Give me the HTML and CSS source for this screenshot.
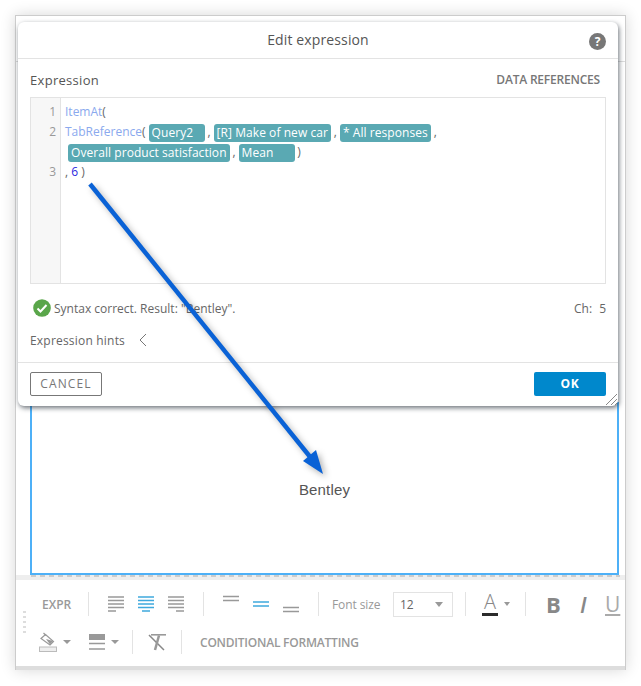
FILE: index.html
```html
<!DOCTYPE html>
<html lang="en">
<head>
<meta charset="utf-8">
<title>Edit expression</title>
<link rel="stylesheet" href="styles.css">
</head>
<body>
<div class="frame">
  <div class="app-head"></div>
  <div class="canvas">
    <div class="textbox"><span class="bentley">Bentley</span></div>
  </div>
  <div class="toolbar">
    <div class="grip"></div>
    <div class="tb-row tb-row-1">
      <span class="tb-label expr">EXPR</span>
      <span class="sep sep-a"></span>
      <svg class="ic ic-a" width="16" height="16" viewBox="0 0 16 16"><path d="M0 1h16M0 4.500h16M0 8h16M0 11.500h16M0 15h8" stroke="#999" stroke-width="1.500" fill="none"/></svg>
      <svg class="ic ic-a" width="16" height="16" viewBox="0 0 16 16"><path d="M0 1h16M0 4.500h16M0 8h16M0 11.500h16M4 15h8" stroke="#3fa9dd" stroke-width="1.500" fill="none"/></svg>
      <svg class="ic ic-a" width="16" height="16" viewBox="0 0 16 16"><path d="M0 1h16M0 4.500h16M0 8h16M0 11.500h16M8 15h8" stroke="#999" stroke-width="1.500" fill="none"/></svg>
      <span class="sep sep-b"></span>
      <svg class="ic ic-a" width="16" height="24" viewBox="0 0 16 24"><path d="M0 4.500h16M0 8.500h16" stroke="#999" stroke-width="1.500" fill="none"/></svg>
      <svg class="ic ic-a" width="16" height="24" viewBox="0 0 16 24"><path d="M0 10h16M0 14h16" stroke="#3fa9dd" stroke-width="1.500" fill="none"/></svg>
      <svg class="ic ic-a" width="16" height="24" viewBox="0 0 16 24"><path d="M0 15.500h16M0 19.500h16" stroke="#999" stroke-width="1.500" fill="none"/></svg>
      <span class="sep sep-b"></span>
      <span class="fs-label">Font size</span>
      <span class="select"><span>12</span><i class="caret caret-lt"></i></span>
      <span class="sep sep-c"></span>
      <span class="color-a">A</span>
      <i class="caret caret-small"></i>
      <span class="sep sep-d"></span>
      <span class="fmt-b">B</span>
      <span class="fmt-i">I</span>
      <span class="fmt-u">U</span>
    </div>
    <div class="tb-row tb-row-2">
      <svg class="ic" width="18" height="20" viewBox="0 0 18 20"><path d="M2 6.500L6.500 2.500 14.500 9.500 11 13Z" stroke="#999" stroke-width="1.200" fill="#fff"/><path d="M7 7L14 9 11 12.500Z" fill="#999"/><path d="M7 3.500L4.500 1" stroke="#999" stroke-width="1.200"/><rect x="0.500" y="15" width="17" height="4.500" fill="#eee" stroke="#bbb"/></svg>
      <i class="caret caret-small caret-paint"></i>
      <svg class="ic ic-borders" width="16" height="16" viewBox="0 0 16 16"><rect width="16" height="6" fill="#999"/><path d="M0 9.500h16M0 15h16" stroke="#999" stroke-width="1.500" fill="none"/></svg>
      <i class="caret caret-small caret-paint"></i>
      <span class="sep sep-e"></span>
      <svg class="ic" width="18" height="17" viewBox="0 0 18 17"><path d="M3 .800h15" stroke="#999" stroke-width="1.600"/><path d="M1 1l15 15" stroke="#888" stroke-width="1.500"/><path d="M11 1.500L7 16" stroke="#999" stroke-width="2.500"/></svg>
      <span class="sep sep-f"></span>
      <span class="tb-label cond">CONDITIONAL FORMATTING</span>
    </div>
  </div>
  <div class="frame-foot"></div>
</div>

<section class="dialog">
  <header class="dlg-head">
    <h1 class="dlg-title">Edit expression</h1>
    <span class="help">?</span>
  </header>
  <div class="dlg-body">
    <div class="expr-head">
      <span class="expr-label">Expression</span>
      <span class="data-refs">DATA REFERENCES</span>
    </div>
    <div class="editor">
      <div class="gutter">
        <div class="ln">1</div>
        <div class="ln">2</div>
        <div class="ln ln-wrap"></div>
        <div class="ln">3</div>
      </div>
      <div class="code">
        <div class="cl"><span class="fn">ItemAt</span>(</div>
        <div class="cl"><span class="fn">TabReference</span>(<span class="chip chip-q">Query2</span><span class="p">,</span><span class="chip">[R] Make of new car</span><span class="p">,</span><span class="chip">* All responses</span><span class="p">,</span></div>
        <div class="cl cl-wrap"><span class="chip">Overall product satisfaction</span><span class="p">,</span><span class="chip chip-m">Mean</span><span class="p">)</span></div>
        <div class="cl">, <span class="num">6</span> )</div>
      </div>
    </div>
    <div class="status">
      <svg class="check" width="18" height="18" viewBox="0 0 18 18"><circle cx="9" cy="9" r="8.800" fill="#5aa64a"/><path d="M4.500 9.500l3 3 6-6.500" stroke="#fff" stroke-width="2" fill="none"/></svg>
      <span class="status-text">Syntax correct. Result: "Bentley".</span>
      <span class="ch">Ch:<span class="ch-v">5</span></span>
    </div>
    <div class="hints">
      <span>Expression hints</span>
      <svg width="8" height="14" viewBox="0 0 8 14"><path d="M7 1L1 7l6 6" stroke="#777" fill="none"/></svg>
    </div>
  </div>
  <footer class="dlg-foot">
    <button class="btn btn-cancel">CANCEL</button>
    <button class="btn btn-ok">OK</button>
  </footer>
  <svg class="resize" width="11" height="11" viewBox="0 0 11 11"><path d="M0 11L11 0M5 11l6-6M9 11l2-2" stroke="#888" fill="none"/></svg>
</section>

<svg class="arrow" width="641" height="686" viewBox="0 0 641 686">
  <path d="M90 184L311 458" stroke="#0a62d6" stroke-width="4.500" fill="none"/>
  <path d="M323 474L303 461L316 450Z" fill="#0a62d6"/>
</svg>
</body>
</html>
```
FILE: styles.css
```css
* { box-sizing: border-box; }
html, body { margin: 0; height: 686px; overflow: hidden; background: #fff; }
body { font-family: "Open Sans", sans-serif; color: #555; }

.frame {
  width: 611px;
  height: 655px;
  margin: 15px 0 0 15px;
  border: 1px solid #ccc;
  border-bottom: 0;
  background: #fff;
  box-shadow: 0 0 14px rgba(0, 0, 0, .16);
  display: flex;
  flex-direction: column;
}
.app-head { height: 46px; border-bottom: 1px solid #ddd; flex: none; }
.canvas { flex: 1; padding: 340px 6px 0 14px; background: #fff; border-bottom: 5px solid #eee; }
.textbox {
  height: 173px;
  border: 2px solid #4db0f7;
  display: flex;
  align-items: center;
  justify-content: center;
  padding-top: 1px;
  background: #fff;
  position: relative;
}
.textbox::after {
  content: "";
  position: absolute; left: -1px; right: -3px; bottom: -4px; height: 2px;
  background: repeating-linear-gradient(90deg, #ccc 0 5px, transparent 5px 9px);
}
.bentley { font: 15px "Liberation Sans", sans-serif; color: #555; letter-spacing: .15px; }

.toolbar { height: 86px; flex: none; position: relative; padding: 12px 0 0 26px; background: #fff; }
.grip {
  position: absolute; left: 7px; top: 31px; width: 3px; height: 25px;
  background: repeating-linear-gradient(#ddd 0 2px, transparent 2px 5px);
}
.tb-row { display: flex; align-items: center; height: 24px; }
.tb-row-2 { margin: 14px 0 0 -3px; }
.frame-foot { height: 4px; background: #ddd; flex: none; }

.tb-label { font-size: 12px; font-weight: 600; color: #999; white-space: nowrap; }
.expr { width: 28px; }
.cond { letter-spacing: -.22px; }
.sep { width: 1px; height: 24px; background: #e3e3e3; flex: none; }
.sep-a { margin: 0 19px 0 18px; }
.sep-b { margin: 0 19px; }
.sep-c { margin: 0 16px 0 12px; }
.sep-d { margin: 0 20px 0 15px; }
.sep-e { margin: 0 15px 0 13px; }
.sep-f { margin: 0 18px 0 15px; }
.ic { flex: none; display: block; }
.ic-a { margin-right: 14px; }
.ic-a + .sep { margin-left: 5px; }
.ic-borders { margin-left: 18px; }
.fs-label { font-size: 12px; color: #999; width: 61px; margin-left: -6px; white-space: nowrap; letter-spacing: -.1px; }
.select {
  width: 60px; height: 25px; border: 1px solid #e3e3e3;
  display: flex; align-items: center; justify-content: space-between;
  padding: 0 9px 0 6px; font-size: 12px; color: #666;
}
.caret { display: block; width: 0; height: 0; border-style: solid; border-color: #999 transparent transparent; flex: none; }
.caret-lt { border-width: 5px 4.500px 0; }
.caret-small { border-width: 4px 3.500px 0; margin-left: 6px; }
.caret-paint { border-width: 4px 4px 0; }
.color-a {
  width: 16px; height: 24px; font-size: 20px; line-height: 20px; color: #888; text-align: center;
  border-bottom: 3px solid #2b2b2b; font-weight: 300;
}
.fmt-b { font-size: 22px; font-weight: 700; color: #888; width: 34px; line-height: 24px; }
.fmt-i { font-size: 22px; font-weight: 600; font-style: italic; color: #888; width: 25px; line-height: 24px; }
.fmt-u { font-size: 21px; color: #aaa; width: 16px; text-decoration: underline; line-height: 24px; flex: none; }

.dialog {
  position: absolute; left: 18px; top: 22px; width: 600px; height: 384px;
  background: #fff; border-radius: 6px;
  box-shadow: 1px 2px 5px rgba(30, 40, 50, .65);
  display: flex; flex-direction: column;
}
.dlg-head { height: 37px; border-bottom: 1px solid #e3e3e3; position: relative; display: flex; align-items: center; justify-content: center; flex: none; }
.dlg-title { margin: 0; font-size: 14px; font-weight: 500; color: #555; padding-bottom: 2px; letter-spacing: .13px; }
.help {
  position: absolute; right: 12px; top: 11px; width: 17px; height: 17px; border-radius: 50%;
  background: #777; color: #fff; font-size: 12px; font-weight: 700; line-height: 17px; text-align: center;
}
.dlg-body { flex: 1; padding: 0 12px; }
.expr-head { height: 38px; display: flex; align-items: center; justify-content: space-between; padding: 3px 6px 0 0; }
.expr-label { font-size: 13px; font-weight: 500; color: #555; letter-spacing: .3px; }
.data-refs { font-size: 12px; font-weight: 550; color: #777; letter-spacing: -.2px; }

.editor { height: 187px; border: 1px solid #e3e3e3; display: flex; }
.gutter { width: 30px; background: #f7f7f7; border-right: 1px solid #e3e3e3; padding-top: 4px; flex: none; }
.ln { height: 20px; font-size: 12px; line-height: 20px; color: #999; text-align: right; padding-right: 4px; }
.code { flex: 1; padding: 4px 0 0 4px; font-size: 12px; color: #666; }
.cl { height: 20px; line-height: 20px; display: flex; align-items: center; white-space: pre; }
.cl-wrap { padding-left: 3px; }
.fn { color: #8aa9ee; }
.num { color: #2a1fe0; }
.chip {
  display: block; height: 18px; line-height: 18px; padding: 0 3px; border-radius: 3px;
  background: #5aa9b3; color: #fff; font-size: 12px; font-weight: 500; margin-top: 1px; letter-spacing: .06px;
}
.fn + .chip { margin-left: 3px; }
.chip-q { width: 56px; }
.chip-m { width: 56px; }
.p { width: 9px; text-align: center; flex: none; }

.status { display: flex; align-items: center; height: 22px; margin-top: 13px; padding-left: 3px; font-size: 12px; color: #666; }
.check { flex: none; margin-right: 3px; }
.status-text { flex: 1; }
.ch { font-size: 12px; }
.ch-v { margin-left: 7px; }
.hints { display: flex; align-items: center; gap: 14px; margin-top: 11px; height: 20px; font-size: 12px; font-weight: 500; color: #666; letter-spacing: .2px; }

.dlg-foot { height: 44px; border-top: 1px solid #e3e3e3; padding: 9px 12px 0; display: flex; justify-content: space-between; flex: none; }
.btn { width: 72px; height: 24px; border-radius: 2px; font-family: "Open Sans", sans-serif; font-size: 12px; padding: 0 0 1px; cursor: pointer; }
.btn-cancel { background: #fff; border: 1px solid #777; color: #777; letter-spacing: 1.1px; font-weight: 500; }
.btn-ok { background: #0088cc; border: 0; color: #fff; font-weight: 700; letter-spacing: .8px; }
.resize { position: absolute; right: 1px; bottom: 1px; }

.arrow { position: absolute; left: 0; top: 0; pointer-events: none; filter: drop-shadow(3px 3px 3px rgba(0, 0, 0, .3)); }
```
